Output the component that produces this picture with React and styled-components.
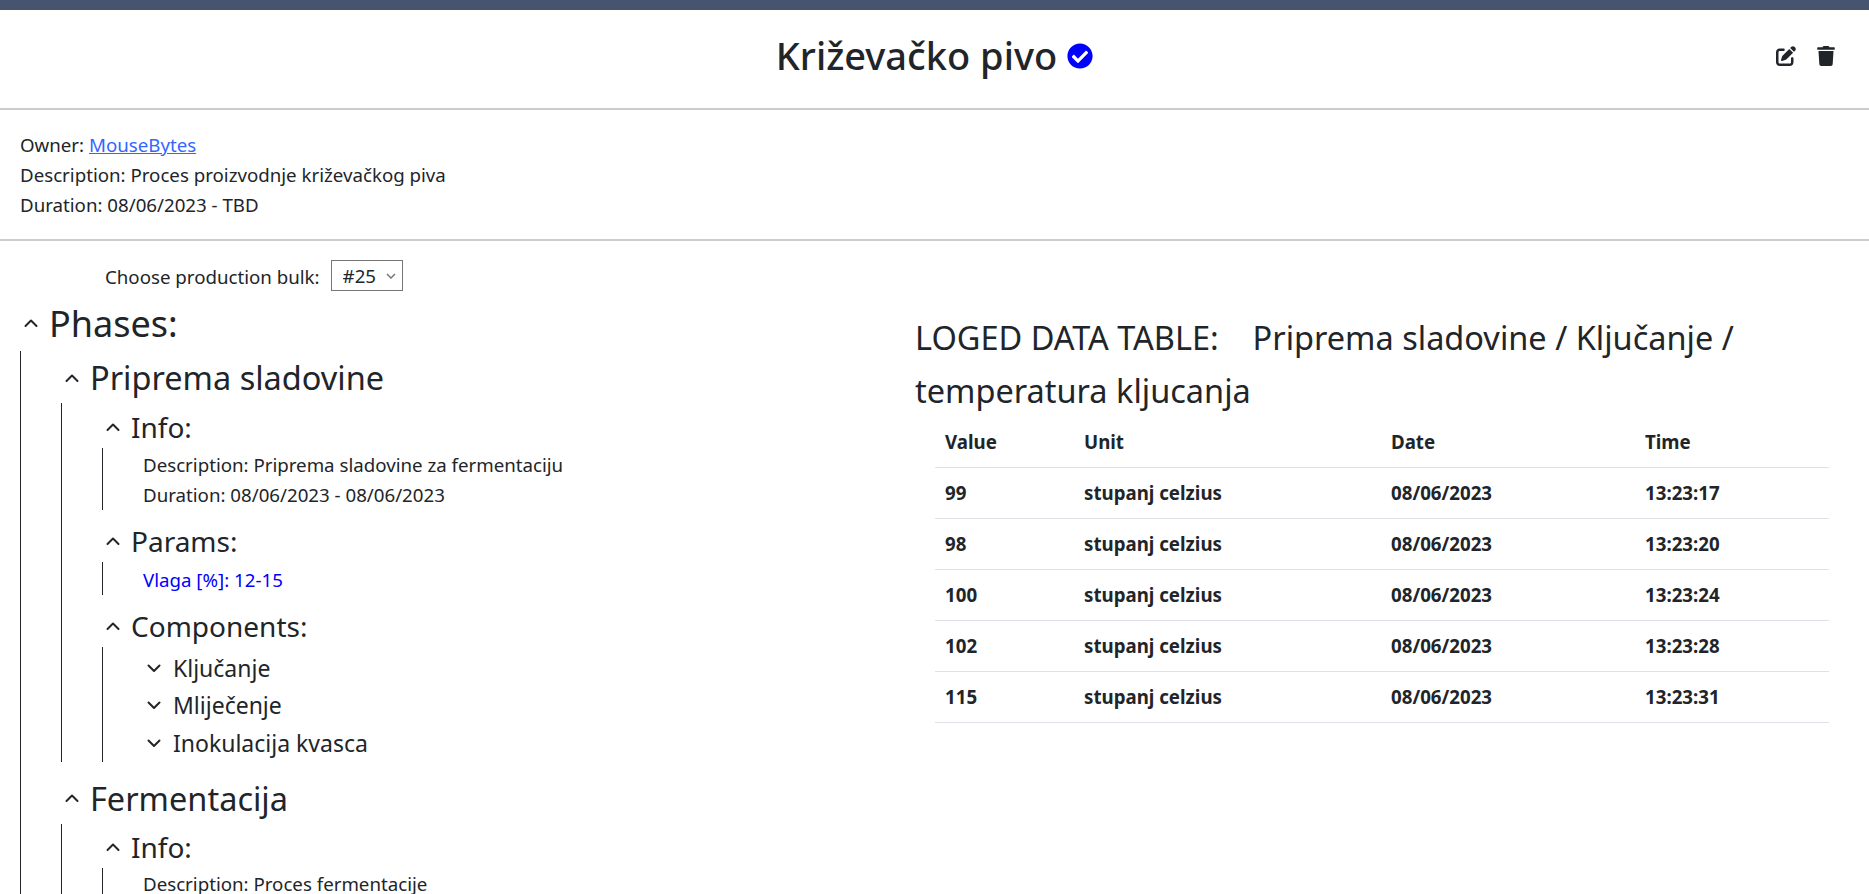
import React from 'react';
import styled, { createGlobalStyle } from 'styled-components';
import { FaCheckCircle, FaTrash } from 'react-icons/fa';
import { FaPenToSquare } from 'react-icons/fa6';

const selectArrow = "url(\"data:image/svg+xml,%3Csvg xmlns='http://www.w3.org/2000/svg' viewBox='0 0 10 6'%3E%3Cpolyline points='1,1 5,5 9,1' fill='none' stroke='%23777' stroke-width='1.5'/%3E%3C/svg%3E\")";

const GlobalStyle = createGlobalStyle`
    html, body {
        margin: 0;
        height: 100%;
        overflow: hidden;
        background: #fff;
    }
    body {
        font-family: "Noto Sans", "Open Sans", sans-serif;
        font-size: 18.7px;
        color: #212529;
    }
`;

const TopBar = styled.div`
    height: 10px;
    background: #47536f;
`;

const Header = styled.header`
    display: grid;
    grid-template-columns: 1fr auto 1fr;
    align-items: center;
    height: 91px;
    padding: 0 33px 7px;
    border-bottom: 2px solid #ccc;
`;

const Title = styled.h1`
    grid-column: 2;
    display: flex;
    align-items: center;
    gap: 10px;
    margin: 0;
    font-size: 38px;
    font-weight: 500;
    line-height: 1.2;
`;

const Verified = styled(FaCheckCircle)`
    color: #0000ff;
    font-size: 26px;
`;

const Actions = styled.div`
    display: flex;
    justify-content: flex-end;
    gap: 20px;
    font-size: 20px;
`;

const Info = styled.section`
    padding: 20px 20px 19px;
    border-bottom: 2px solid #ccc;
`;

const Line = styled.div`
    line-height: 30px;
    color: ${props => props.$color || 'inherit'};
`;

const OwnerLink = styled.a`
    color: #3366ff;
    text-decoration: underline;
`;

const BulkRow = styled.div`
    display: flex;
    align-items: center;
    gap: 11px;
    height: 31px;
    margin-top: 19px;
    padding-left: 105px;
`;

const BulkLabel = styled.span`
    position: relative;
    top: 1px;
`;

const BulkSelect = styled.select`
    width: 72px;
    height: 31px;
    padding-left: 11px;
    font: inherit;
    color: #212529;
    appearance: none;
    background: #fff ${selectArrow} no-repeat right 6px center / 10px 6px;
    border: 1px solid #767676;
`;

const Main = styled.main`
    display: grid;
    grid-template-columns: 915px 1fr;
    margin-top: 8px;
`;

const Tree = styled.div`
    min-width: 0;
    margin-left: 20px;
`;

const Node = styled.div`
    margin-bottom: ${props => props.$gap || 0}px;
`;

const Row = styled.div`
    display: flex;
    align-items: center;
    gap: ${props => props.$leaf ? 12 : 11}px;
    height: ${props => props.$height}px;
    margin-bottom: ${props => props.$leaf ? 0 : 4}px;
    padding-left: 4px;
    font-size: ${props => props.$size}px;
`;

const Children = styled.div`
    padding: ${props => props.$top || 0}px 0 0 40px;
    border-left: 1px solid #212529;
`;

const Chevron = styled.svg`
    flex: none;
    width: 14px;
    height: 14px;
    fill: none;
    stroke: #212529;
    stroke-width: 2;
    stroke-linecap: round;
    stroke-linejoin: round;
`;

const DataPanel = styled.section`
    padding: 12px 20px 0 0;
`;

const DataTitle = styled.h2`
    margin: 0;
    font-size: 32.5px;
    font-weight: 400;
    line-height: 53px;
`;

const DataTable = styled.table`
    width: 894px;
    margin-left: 20px;
    border-collapse: collapse;
    table-layout: fixed;
    line-height: 30px;
`;

const Cell = styled.td`
    box-sizing: border-box;
    width: ${props => props.$width ? `${props.$width}px` : 'auto'};
    padding: 10px;
    font-weight: 700;
    text-align: left;
    border-bottom: 1px solid #dee2e6;
`;

const Toggle = ({ open }) => (
    <Chevron viewBox="0 0 14 14">
        <polyline points={open ? '1.5,10 7,4.5 12.5,10' : '1.5,4.5 7,10 12.5,4.5'} />
    </Chevron>
);

const rows = [
    ['99', '13:23:17'],
    ['98', '13:23:20'],
    ['100', '13:23:24'],
    ['102', '13:23:28'],
    ['115', '13:23:31'],
];

const PhaseRow = ({ children }) => (
    <Row $height={43} $size={32.5}><Toggle open />{children}</Row>
);

const SectionRow = ({ children }) => (
    <Row $height={34} $size={28}><Toggle open />{children}</Row>
);

const LeafRow = ({ children }) => (
    <Row $leaf $height={37.5} $size={23}><Toggle />{children}</Row>
);

export default function App() {
    return (
        <>
            <GlobalStyle />
            <TopBar />
            <Header>
                <Title>Križevačko pivo <Verified /></Title>
                <Actions>
                    <FaPenToSquare />
                    <FaTrash />
                </Actions>
            </Header>
            <Info>
                <Line>Owner: <OwnerLink href="#">MouseBytes</OwnerLink></Line>
                <Line>Description: Proces proizvodnje križevačkog piva</Line>
                <Line>Duration: 08/06/2023 - TBD</Line>
            </Info>
            <BulkRow>
                <BulkLabel>Choose production bulk:</BulkLabel>
                <BulkSelect defaultValue="25">
                    <option value="25">#25</option>
                </BulkSelect>
            </BulkRow>
            <Main>
                <Tree>
                    <Row $height={48} $size={36}><Toggle open />Phases:</Row>
                    <Children $top={5}>
                        <Node $gap={15}>
                            <PhaseRow>Priprema sladovine</PhaseRow>
                            <Children $top={7}>
                                <Node $gap={14}>
                                    <SectionRow>Info:</SectionRow>
                                    <Children $top={2}>
                                        <Line>Description: Priprema sladovine za fermentaciju</Line>
                                        <Line>Duration: 08/06/2023 - 08/06/2023</Line>
                                    </Children>
                                </Node>
                                <Node $gap={14}>
                                    <SectionRow>Params:</SectionRow>
                                    <Children $top={3}>
                                        <Line $color="#0000ff">Vlaga [%]: 12-15</Line>
                                    </Children>
                                </Node>
                                <Node>
                                    <SectionRow>Components:</SectionRow>
                                    <Children $top={2}>
                                        <LeafRow>Ključanje</LeafRow>
                                        <LeafRow>Mliječenje</LeafRow>
                                        <LeafRow>Inokulacija kvasca</LeafRow>
                                    </Children>
                                </Node>
                            </Children>
                        </Node>
                        <Node>
                            <PhaseRow>Fermentacija</PhaseRow>
                            <Children $top={6}>
                                <Node>
                                    <SectionRow>Info:</SectionRow>
                                    <Children $top={1}>
                                        <Line>Description: Proces fermentacije</Line>
                                    </Children>
                                </Node>
                            </Children>
                        </Node>
                    </Children>
                </Tree>
                <DataPanel>
                    <DataTitle>LOGED DATA TABLE: {'\u00a0\u00a0'} Priprema sladovine / Ključanje / temperatura kljucanja</DataTitle>
                    <DataTable>
                        <thead>
                            <tr>
                                <Cell as="th" $width={139}>Value</Cell>
                                <Cell as="th" $width={307}>Unit</Cell>
                                <Cell as="th" $width={254}>Date</Cell>
                                <Cell as="th">Time</Cell>
                            </tr>
                        </thead>
                        <tbody>
                            {rows.map(row => (
                                <tr key={row[1]}>
                                    <Cell>{row[0]}</Cell>
                                    <Cell>stupanj celzius</Cell>
                                    <Cell>08/06/2023</Cell>
                                    <Cell>{row[1]}</Cell>
                                </tr>
                            ))}
                        </tbody>
                    </DataTable>
                </DataPanel>
            </Main>
        </>
    );
}
